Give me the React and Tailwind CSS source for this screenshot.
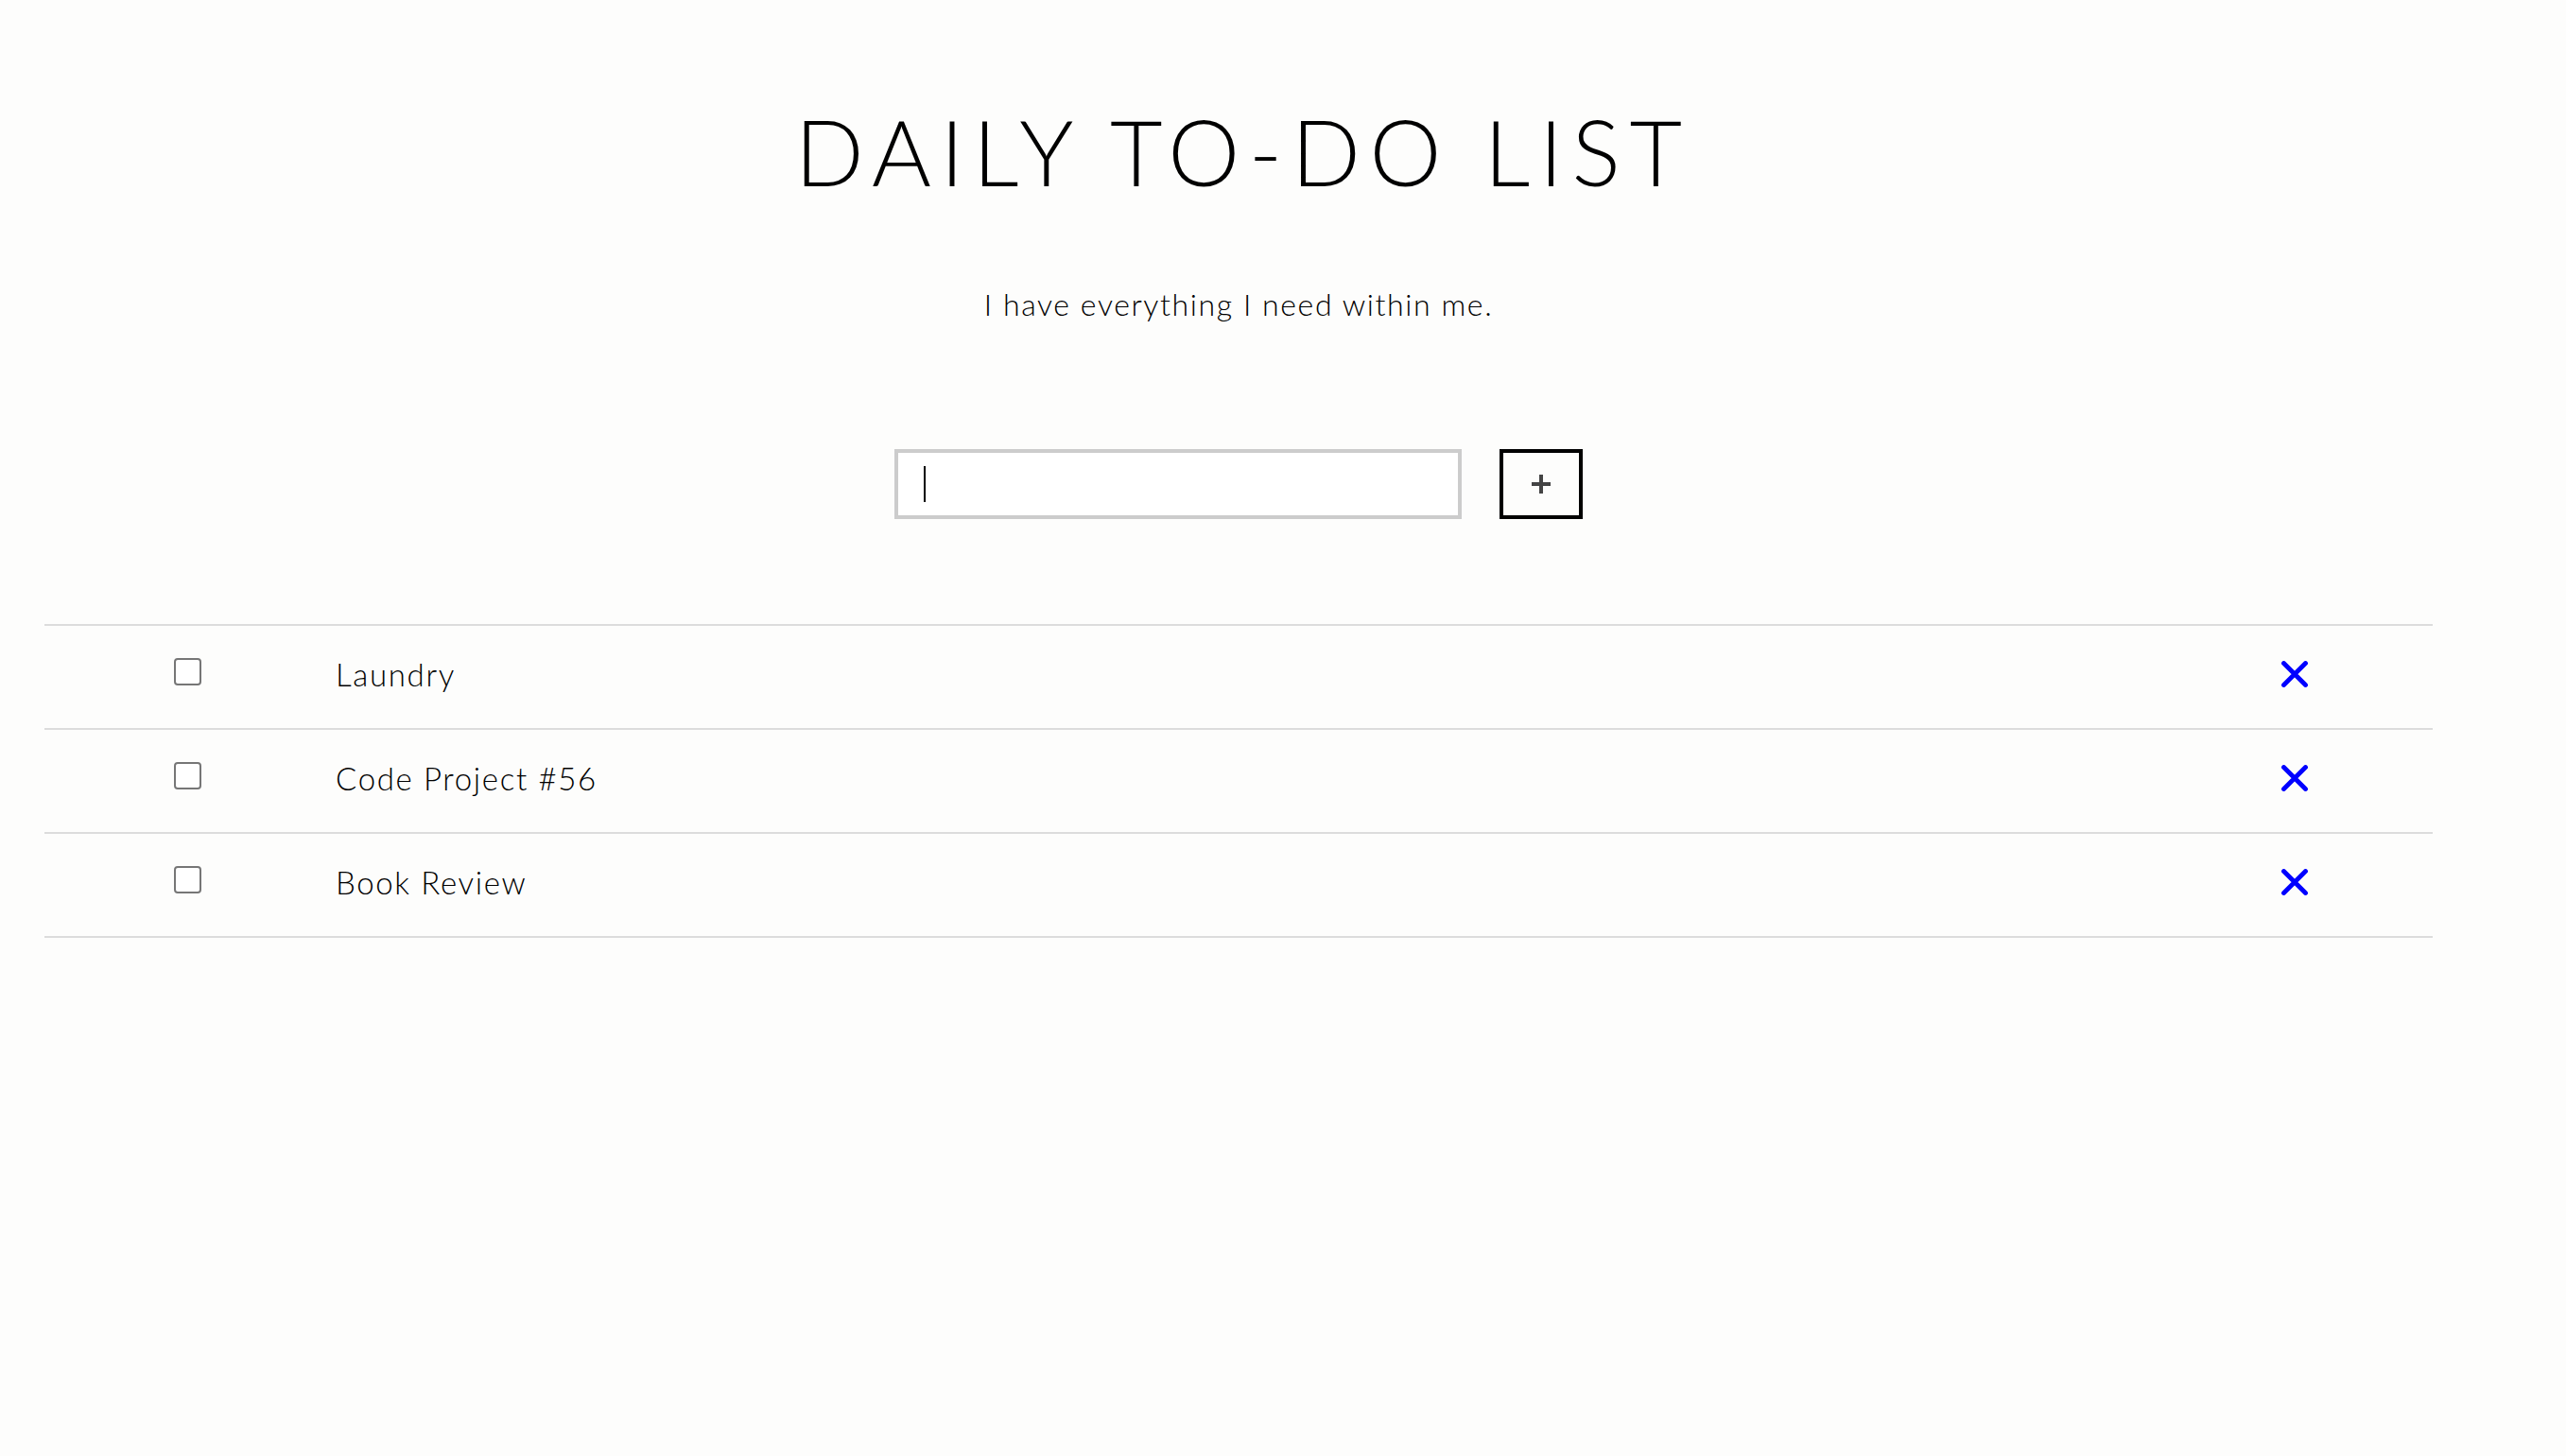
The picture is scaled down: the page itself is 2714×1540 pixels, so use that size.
import React, { useState } from 'react';

const FONT = { fontFamily: '"Lato", "Open Sans", sans-serif' };

const initialTodos = [
  { id: 1, text: 'Laundry', done: false },
  { id: 2, text: 'Code Project #56', done: false },
  { id: 3, text: 'Book Review', done: false }
];

const RemoveIcon = () => (
  <svg width="28" height="28" viewBox="0 0 28 28" fill="none">
    <path d="M2.5 2.5 25.5 25.5M25.5 2.5 2.5 25.5" stroke="#0000ff" strokeWidth="4.8" strokeLinecap="round" />
  </svg>
);

const PlusIcon = () => (
  <svg width="22" height="22" viewBox="0 0 22 22" fill="none">
    <path d="M11 1v20M1 11h20" stroke="#444444" strokeWidth="4" />
  </svg>
);

const TodoRow = ({ todo, onToggle, onRemove }) => (
  <li className="flex items-center h-[110px] border-b-2 border-[#dcdcdc]">
    <button
      onClick={() => onToggle(todo.id)}
      className="ml-[137px] mb-[11px] w-[29px] h-[29px] shrink-0 rounded-[4px] border-2 border-[#767676] bg-white"
    />
    <span className="ml-[142px] mb-[5px] flex-1 text-[33px] font-light tracking-[0.05em] text-black">
      {todo.text}
    </span>
    <button onClick={() => onRemove(todo.id)} className="mr-[132px] mb-[7px] flex">
      <RemoveIcon />
    </button>
  </li>
);

export default function App() {
  const [todos, setTodos] = useState(initialTodos);
  const [draft, setDraft] = useState('');

  const addTodo = () => {
    if (!draft.trim()) return;
    setTodos([...todos, { id: Date.now(), text: draft.trim(), done: false }]);
    setDraft('');
  };

  const toggleTodo = (id) =>
    setTodos(todos.map((t) => (t.id === id ? { ...t, done: !t.done } : t)));

  const removeTodo = (id) => setTodos(todos.filter((t) => t.id !== id));

  return (
    <div className="min-h-screen w-full bg-[#fdfdfc] text-black" style={FONT}>
      <main className="w-[2620px] flex flex-col items-center pt-[112px]">
        <h1 className="text-[96px] leading-none font-light tracking-[0.1em] pl-[0.1em]">
          DAILY TO-DO LIST
        </h1>

        <p className="mt-[98px] text-[32px] leading-none font-light tracking-[0.05em]">
          I have everything I need within me.
        </p>

        <div className="mt-[137px] flex items-center gap-[40px]">
          <div className="flex items-center w-[600px] h-[74px] border-4 border-[#cccccc] bg-white pl-[27px]">
            <div className="w-[2px] h-[38px] bg-black shrink-0" />
            <input
              value={draft}
              onChange={(e) => setDraft(e.target.value)}
              onKeyDown={(e) => e.key === 'Enter' && addTodo()}
              className="flex-1 h-full bg-transparent outline-none text-[32px] font-light caret-transparent"
            />
          </div>
          <button
            onClick={addTodo}
            className="w-[88px] h-[74px] border-4 border-black flex items-center justify-center"
          >
            <PlusIcon />
          </button>
        </div>

        <ul className="mt-[111px] self-stretch mx-[47px] border-t-2 border-[#dcdcdc]">
          {todos.map((todo) => (
            <TodoRow key={todo.id} todo={todo} onToggle={toggleTodo} onRemove={removeTodo} />
          ))}
        </ul>
      </main>
    </div>
  );
}
